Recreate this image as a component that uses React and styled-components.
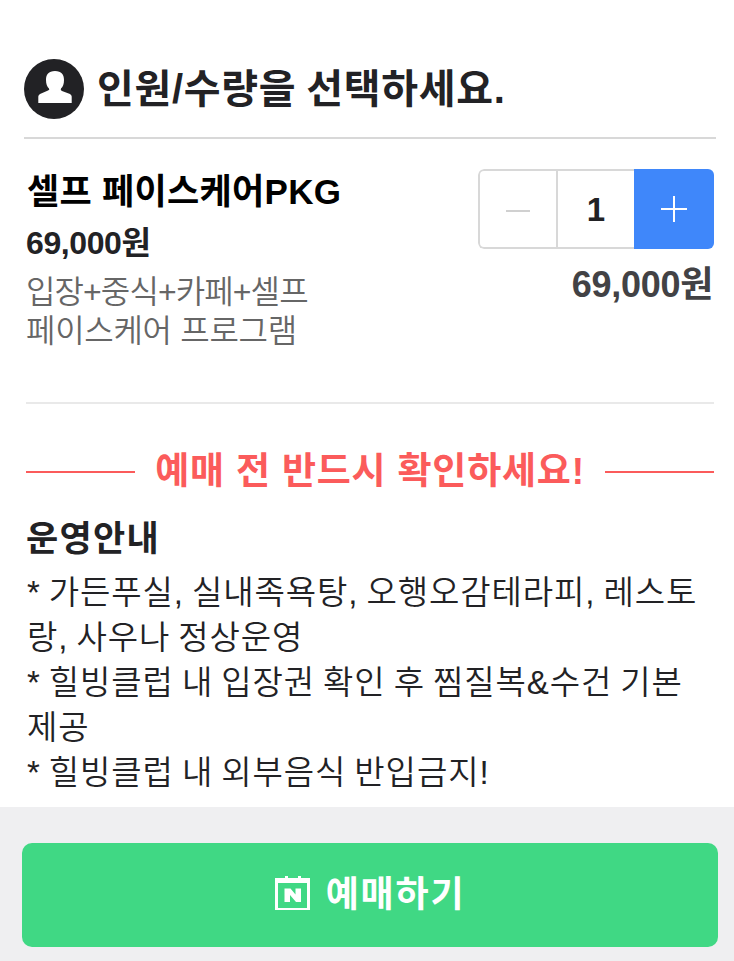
import React, { useState } from 'react';
import styled, { createGlobalStyle } from 'styled-components';

const GlobalStyle = createGlobalStyle`
  * {
    box-sizing: border-box;
    margin: 0;
    padding: 0;
  }

  body {
    background-color: #fff;
    color: #222225;
    font-family: 'Liberation Sans', 'Noto Sans CJK KR', sans-serif;
  }

  button {
    border: 0;
    background: none;
    font-family: inherit;
    cursor: pointer;
  }
`;

const Page = styled.div`
  display: flex;
  flex-direction: column;
  height: 961px;
  overflow: hidden;
`;

const Content = styled.main`
  flex: 1;
  padding: 59px 18px 0 24px;
`;

const StepHeader = styled.header`
  display: flex;
  align-items: center;
  gap: 13px;
  height: 80px;
  padding-bottom: 18px;
  border-bottom: 2px solid #d8d8d8;

  svg {
    flex: none;
  }

  h2 {
    font-size: 40px;
    font-weight: 700;
    line-height: 58px;
    letter-spacing: 0.7px;
    word-spacing: -2px;
    white-space: nowrap;
  }
`;

const Option = styled.section`
  display: flex;
  justify-content: space-between;
  height: 265px;
  margin: 0 2px;
  padding-top: 30px;
  border-bottom: 2px solid #e9e9e9;
`;

const OptionInfo = styled.div`
  h3 {
    padding-left: 1px;
    color: #000;
    font-size: 35px;
    font-weight: 700;
    line-height: 46px;
    letter-spacing: 0.3px;
  }

  strong {
    display: block;
    margin-top: 8px;
    font-size: 32px;
    line-height: 40px;
    letter-spacing: -0.4px;
  }

  p {
    margin-top: 10px;
    color: #666;
    font-size: 32px;
    font-weight: 350;
    line-height: 39px;
    letter-spacing: -0.3px;

    /* '+'가 많은 첫 줄은 자간을 더 좁게 */
    &::first-line {
      letter-spacing: -0.9px;
    }
  }
`;

const OptionCount = styled.div`
  display: flex;
  flex-direction: column;
  align-items: flex-end;
`;

const Stepper = styled.div`
  display: flex;
  width: 236px;
  height: 80px;
  border-radius: 6px;
  overflow: hidden;
`;

const StepButton = styled.button`
  display: flex;
  align-items: center;
  justify-content: center;
  width: ${({ $plus }) => ($plus ? '80px' : '78px')};
  padding-top: ${({ $plus }) => ($plus ? '0' : '4px')};
  border: ${({ $plus }) => ($plus ? '0' : '2px solid #d8d8d8')};
  border-right: 0;
  border-radius: ${({ $plus }) => ($plus ? '0' : '6px 0 0 6px')};
  background-color: ${({ $plus }) => ($plus ? '#3f87fa' : '#fff')};
`;

const Count = styled.span`
  width: 78px;
  border: 2px solid #d8d8d8;
  border-right: 0;
  font-size: 33px;
  font-weight: 700;
  line-height: 78px;
  text-align: center;
`;

const Total = styled.strong`
  margin: 14px 1px 0 0;
  color: #424245;
  font-size: 36px;
  line-height: 44px;
  letter-spacing: -0.3px;
`;

const NoticeTitle = styled.h3`
  display: flex;
  align-items: center;
  gap: 20px;
  height: 56px;
  margin: 40px 2px 0;
  color: #fb5b5b;
  font-size: 37px;
  font-weight: 700;
  line-height: 54px;
  letter-spacing: 0.8px;
  white-space: nowrap;

  &::before,
  &::after {
    content: '';
    flex: 1;
    height: 2px;
    background-color: #fb5b5b;
  }
`;

const Notice = styled.section`
  padding: 13px 2px 0;

  h4 {
    margin-bottom: 5px;
    font-size: 35px;
    font-weight: 700;
    line-height: 52px;
    letter-spacing: 1.3px;
  }

  p {
    padding-left: 1px;
    font-size: 33px;
    font-weight: 350;
    line-height: 45px;
    letter-spacing: 0.9px;
    word-spacing: -2px;
    white-space: nowrap;
  }
`;

const Footer = styled.footer`
  height: 154px;
  padding: 36px 16px 14px 22px;
  background-color: #efeff1;
`;

const BookButton = styled.button`
  display: flex;
  align-items: center;
  justify-content: center;
  gap: 16px;
  width: 100%;
  height: 104px;
  padding-bottom: 8px;
  border-radius: 10px;
  background-color: #40d884;
  color: #fff;
  font-size: 36px;
  font-weight: 700;
  letter-spacing: 1.8px;

  svg {
    margin-top: 3px;
  }
`;

const PRICE = 69000;

const notices = [
  '* 가든푸실, 실내족욕탕, 오행오감테라피, 레스토',
  '랑, 사우나 정상운영',
  '* 힐빙클럽 내 입장권 확인 후 찜질복&수건 기본',
  '제공',
  '* 힐빙클럽 내 외부음식 반입금지!',
];

const PersonIcon = () => (
  <svg width="60" height="60" viewBox="0 0 60 60">
    <circle cx="30" cy="30" r="30" fill="#222225" />
    <path
      d="M31 12c6.500 0 9 3.500 9 9c0 4-1 6.500-3 8.500q-1 1.500 1 2.500L46 35q1.700 1 1.700 2.500V44H14.300v-6.500q0-1.500 1.700-2.500l8-3.500q2-.5 1-2c-2-2-3-4.500-3-8.500c0-5.500 2.500-9 9-9z"
      fill="#fff"
    />
  </svg>
);

const CalendarIcon = () => (
  <svg width="35" height="34" viewBox="0 0 35 34" fill="#fff">
    <path fillRule="evenodd" d="M0 2h10V0h3v2h10V0h3v2h9v32H0zM3 7v25h29V7z" />
    <path d="M9.500 12.500h6l5 6v-6h5.500v13.500h-5l-6-7v7H9.500z" />
  </svg>
);

function App() {
  const [count, setCount] = useState(1);

  return (
    <>
      <GlobalStyle />
      <Page>
        <Content>
          <StepHeader>
            <PersonIcon />
            <h2>인원/수량을 선택하세요.</h2>
          </StepHeader>
          <Option>
            <OptionInfo>
              <h3>셀프 페이스케어PKG</h3>
              <strong>{PRICE.toLocaleString('en-US')}원</strong>
              <p>
                입장+중식+카페+셀프
                <br />
                페이스케어 프로그램
              </p>
            </OptionInfo>
            <OptionCount>
              <Stepper>
                <StepButton aria-label="빼기" onClick={() => setCount(Math.max(1, count - 1))}>
                  <svg width="24" height="2">
                    <path d="M0 1h24" stroke="#d0d0d0" strokeWidth="2" />
                  </svg>
                </StepButton>
                <Count>{count}</Count>
                <StepButton $plus aria-label="더하기" onClick={() => setCount(count + 1)}>
                  <svg width="26" height="26">
                    <path d="M0 13h26M13 0v26" stroke="#fff" strokeWidth="2" />
                  </svg>
                </StepButton>
              </Stepper>
              <Total>{(PRICE * count).toLocaleString('en-US')}원</Total>
            </OptionCount>
          </Option>
          <NoticeTitle>예매 전 반드시 확인하세요!</NoticeTitle>
          <Notice>
            <h4>운영안내</h4>
            {notices.map((line) => (
              <p key={line}>{line}</p>
            ))}
          </Notice>
        </Content>
        <Footer>
          <BookButton>
            <CalendarIcon />
            예매하기
          </BookButton>
        </Footer>
      </Page>
    </>
  );
}

export default App;
